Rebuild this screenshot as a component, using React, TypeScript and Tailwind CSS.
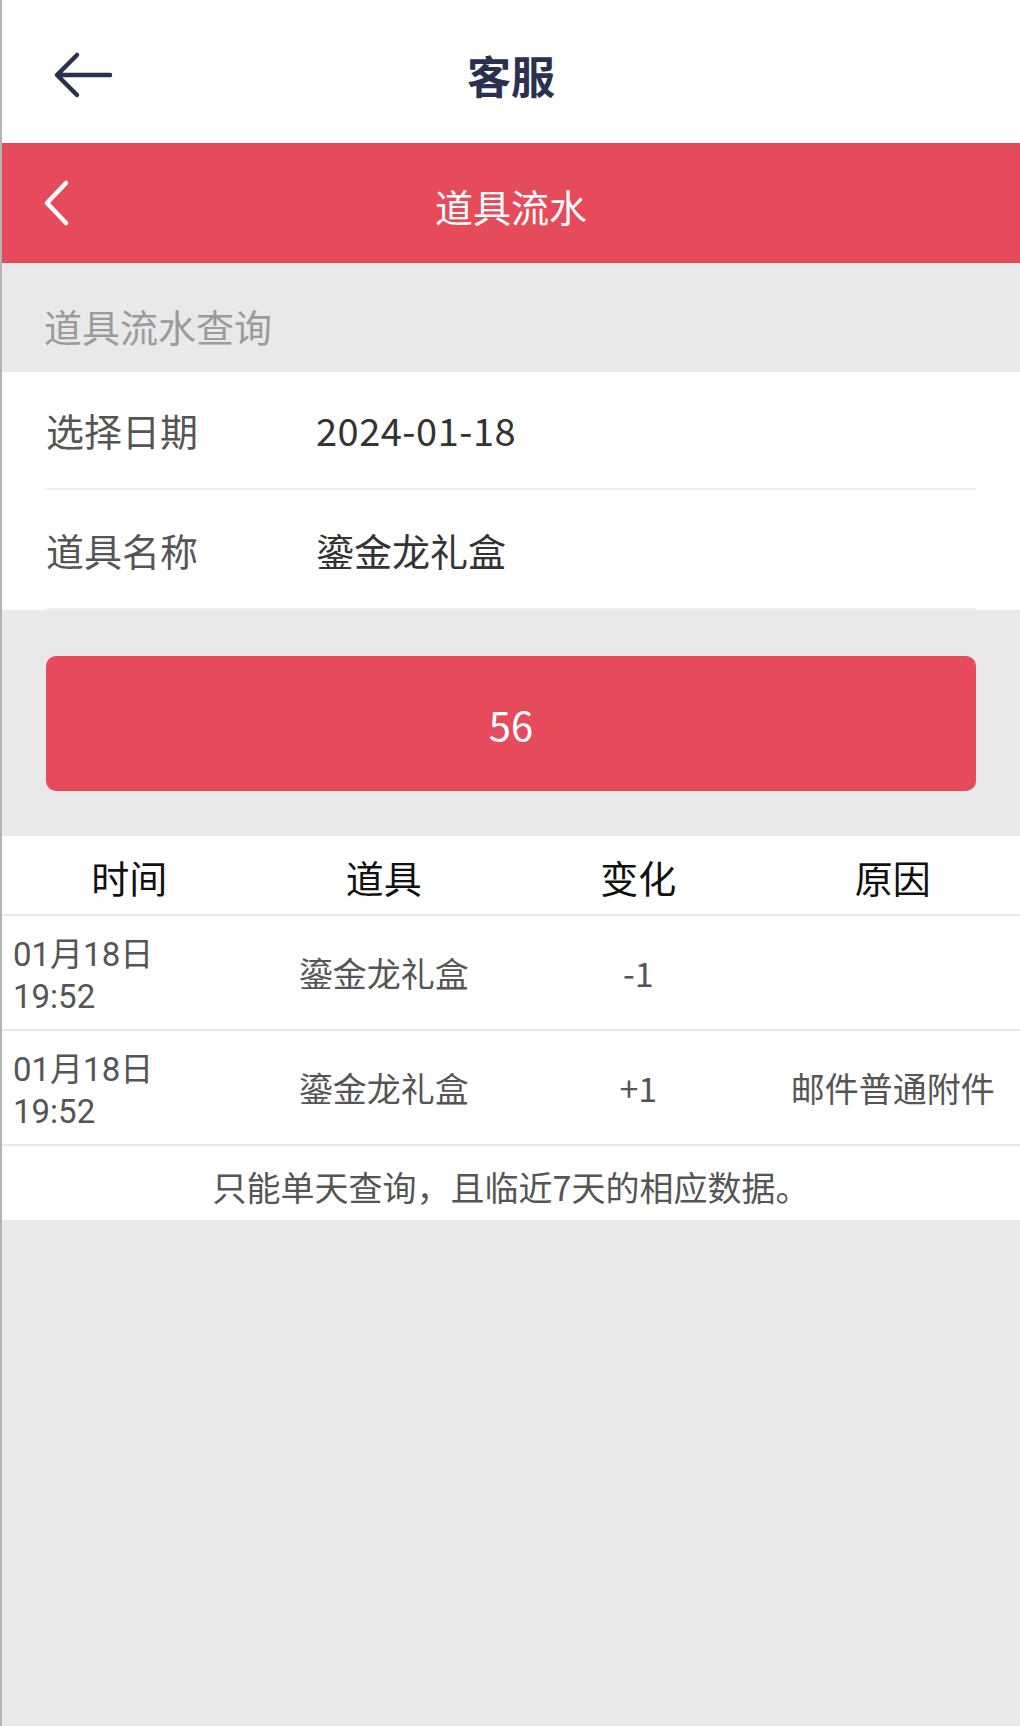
const rows = [
  { day: '01月18日', time: '19:52', item: '鎏金龙礼盒', change: '-1', reason: '' },
  { day: '01月18日', time: '19:52', item: '鎏金龙礼盒', change: '+1', reason: '邮件普通附件' },
];

function BackArrow() {
  return (
    <svg width="64" height="50" viewBox="0 0 64 50" fill="none">
      <path d="M58 25H5M25 5L5 25l20 20" stroke="#28304d" strokeWidth="4.5" strokeLinecap="round" strokeLinejoin="round" />
    </svg>
  );
}

function Chevron() {
  return (
    <svg width="30" height="48" viewBox="0 0 30 48" fill="none">
      <path d="M24 4L5 24l19 20" stroke="#ffffff" strokeWidth="4.5" strokeLinecap="round" strokeLinejoin="round" />
    </svg>
  );
}

export default function App() {
  return (
    <div
      className="min-h-[1726px] w-[1020px] bg-[#e9e9e9] border-l-2 border-[#b4b4b4]"
      style={{ fontFamily: '"Noto Sans CJK SC", "Noto Sans", sans-serif' }}
    >
      {/* Top header */}
      <div className="h-[143px] bg-white grid grid-cols-[1fr_auto_1fr] items-center pt-[6px]">
        <div className="pl-[50px] flex items-center">
          <BackArrow />
        </div>
        <h1 className="text-[44px] font-bold text-[#2a3150] leading-none">客服</h1>
        <div />
      </div>

      {/* Red sub header */}
      <div className="h-[120px] bg-[#e54b5b] grid grid-cols-[1fr_auto_1fr] items-center">
        <div className="pl-[40px] flex items-center">
          <Chevron />
        </div>
        <h2 className="text-[38px] text-white leading-none pt-[6px]">道具流水</h2>
        <div />
      </div>

      {/* Section label */}
      <div className="h-[109px] flex items-center pl-[42px] pt-[16px] text-[38px] text-[#9b9b9b] leading-none">
        道具流水查询
      </div>

      {/* Form */}
      <div className="bg-white">
        <div className="mx-[44px] h-[118px] flex items-center border-b-2 border-[#f0f0f0] text-[38px] leading-none">
          <span className="w-[270px] text-[#555555]">选择日期</span>
          <span className="text-[#333333] tracking-[0.5px]">2024-01-18</span>
        </div>
        <div className="mx-[44px] h-[120px] flex items-center pt-[2px] border-b-2 border-[#f0f0f0] text-[38px] leading-none">
          <span className="w-[270px] text-[#555555]">道具名称</span>
          <span className="text-[#333333]">鎏金龙礼盒</span>
        </div>
      </div>

      {/* Count button */}
      <div className="px-[44px] pt-[46px] pb-[45px]">
        <button className="w-full h-[135px] rounded-[10px] bg-[#e54b5b] text-white text-[40px] leading-none flex items-center justify-center">
          56
        </button>
      </div>

      {/* Table */}
      <div className="bg-white">
        <div className="h-[80px] grid grid-cols-4 items-center text-center text-[38px] text-[#111111] leading-none border-b-2 border-[#e8e8e8] pt-[4px]">
          <span>时间</span>
          <span>道具</span>
          <span>变化</span>
          <span>原因</span>
        </div>
        {rows.map((r, i) => (
          <div
            key={i}
            className="h-[115px] grid grid-cols-4 items-center text-[34px] text-[#555555] border-b-2 border-[#e8e8e8]"
          >
            <div
              className="pl-[11px] leading-[42px] pt-[6px] text-[33px]"
              style={{ fontFamily: 'Roboto, "Noto Sans CJK SC", sans-serif' }}
            >
              <div>{r.day}</div>
              <div>{r.time}</div>
            </div>
            <div className="text-center">{r.item}</div>
            <div className="text-center">{r.change}</div>
            <div className="text-center">{r.reason}</div>
          </div>
        ))}
        <div className="h-[74px] flex items-center justify-center text-[34px] text-[#555555] pt-[6px]">
          只能单天查询，且临近7天的相应数据。
        </div>
      </div>
    </div>
  );
}
